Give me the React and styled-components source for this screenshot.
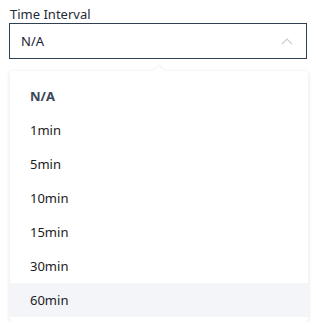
import React, { useState } from "react";
import styled, { createGlobalStyle } from "styled-components";

const GlobalStyle = createGlobalStyle`
  html, body {
    margin: 0;
    padding: 0;
    background: #ffffff;
    font-family: "Noto Sans", "Open Sans", sans-serif;
  }
`;

const OPTIONS = ["N/A", "1min", "5min", "10min", "15min", "30min", "60min"];

const Field = styled.div`
  padding: 5px 9px 0 9px;
  width: 298px;
  display: flex;
  flex-direction: column;
`;

const Label = styled.label`
  font-size: 13px;
  line-height: 18px;
  color: #1f2a36;
  padding-left: 1px;
  margin-bottom: 0;
`;

const SelectBox = styled.div`
  box-sizing: border-box;
  height: 36px;
  border: 1px solid #2f4051;
  display: flex;
  align-items: center;
  justify-content: space-between;
  padding: 0 13px 0 11px;
  font-size: 13px;
  color: #16232f;
  cursor: pointer;
`;

const Chevron = styled.svg`
  width: 12px;
  height: 8px;
`;

const Menu = styled.div`
  position: relative;
  margin-top: 12px;
  margin-left: 1px;
  width: 298px;
  box-sizing: border-box;
  background: #ffffff;
  border-radius: 3px;
  box-shadow: 0 1px 4px rgba(30, 40, 60, 0.14);
  padding: 8px 0 5px 0;

  &::before {
    content: "";
    position: absolute;
    top: -5px;
    left: 143px;
    width: 0;
    height: 0;
    border-left: 6px solid transparent;
    border-right: 6px solid transparent;
    border-bottom: 5px solid #ffffff;
    filter: drop-shadow(0 -1px 1px rgba(30, 40, 60, 0.08));
  }
`;

const Item = styled.div`
  height: 34px;
  display: flex;
  align-items: center;
  padding-left: 20px;
  font-size: 13px;
  font-weight: ${(p) => (p.selected ? 700 : 400)};
  color: ${(p) => (p.selected ? "#3a4757" : "#1c2024")};
  background: ${(p) => (p.active ? "#f4f5f9" : "transparent")};
`;

const App = () => {
  const [value] = useState("N/A");
  return (
    <>
      <GlobalStyle />
      <Field>
        <Label>Time Interval</Label>
        <SelectBox>
          <span>{value}</span>
          <Chevron viewBox="0 0 12 8">
            <path d="M1 7 L6 2 L11 7" fill="none" stroke="#c9ced6" strokeWidth="1.2" />
          </Chevron>
        </SelectBox>
        <Menu>
          {OPTIONS.map((o) => (
            <Item key={o} selected={o === value} active={o === "60min"}>
              {o}
            </Item>
          ))}
        </Menu>
      </Field>
    </>
  );
};

export default App;
